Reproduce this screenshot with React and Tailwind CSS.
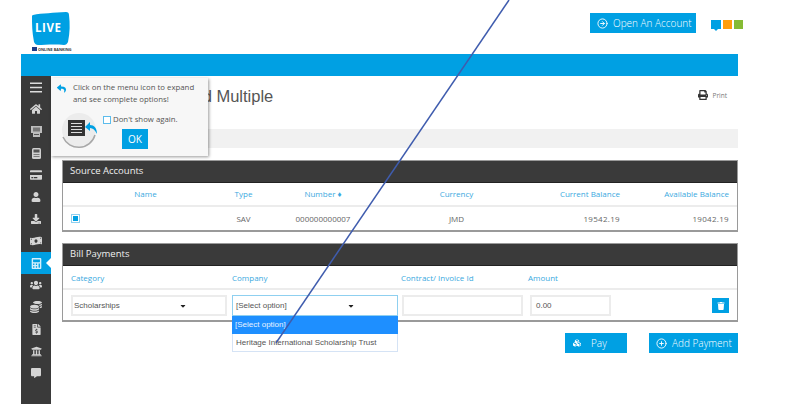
import {
  FaHome, FaCreditCard, FaUser, FaDownload, FaMoneyBillWave, FaCalculator, FaUsers, FaCoins,
  FaFileInvoiceDollar, FaUniversity, FaCommentAlt, FaPrint, FaTrash, FaReply, FaCaretDown, FaCubes,
} from "react-icons/fa";
import { FiArrowRightCircle, FiPlusCircle } from "react-icons/fi";

const MenuLines = () => (
  <svg width="12" height="11" viewBox="0 0 12 11">
    <path d="M0 1.2h12M0 5.5h12M0 9.8h12" stroke="#ddd" strokeWidth="1.4" />
  </svg>
);

const AtmIcon = () => (
  <svg width="11" height="11" viewBox="0 0 11 11">
    <path d="M0 0h11v7H9v4H2V7H0Z" fill="#bdbdbd" />
    <path d="M2 1.5h7v4H2Z" fill="#777" />
    <path d="M3 8h5v1H3Z" fill="#555" />
  </svg>
);

const DeviceIcon = () => (
  <svg width="9" height="11" viewBox="0 0 9 11">
    <rect x="0" y="0" width="9" height="11" rx="1.5" fill="#cfcfcf" />
    <rect x="1.5" y="1.5" width="6" height="3" fill="#555" />
    <path d="M1.5 6.5h6M1.5 8.5h6" stroke="#666" strokeWidth="0.8" />
  </svg>
);

const sideItems = [
  { custom: MenuLines },
  { icon: FaHome, size: 12 },
  { custom: AtmIcon },
  { custom: DeviceIcon },
  { icon: FaCreditCard, size: 12 },
  { icon: FaUser, size: 10 },
  { icon: FaDownload, size: 10 },
  { icon: FaMoneyBillWave, size: 12 },
  { icon: FaCalculator, size: 11, active: true },
  { icon: FaUsers, size: 12 },
  { icon: FaCoins, size: 12 },
  { icon: FaFileInvoiceDollar, size: 11 },
  { icon: FaUniversity, size: 11 },
  { icon: FaCommentAlt, size: 10 },
];

const Logo = () => (
  <svg width="42" height="40" viewBox="0 0 42 40" className="block">
    <path d="M3 3 C12 1 24 1 36 0 C38 0 39 1 39 3 C40 12 40 20 38 30 C37 32 36 33 34 33 C24 32 14 33 8 33 C6 33 5 32 4 30 C2 20 2 12 2 5 C2 4 2 3 3 3 Z" fill="#00a0e3" />
    <text x="5" y="20" fill="#fff" fontSize="11.5" fontWeight="700" letterSpacing="0.6" fontFamily="'Open Sans', sans-serif">LIVE</text>
    <rect x="2" y="35" width="5" height="4" fill="#1f3c88" />
    <text x="8" y="39" fill="#333" fontSize="3.8" fontWeight="700" fontFamily="'Open Sans', sans-serif">ONLINE BANKING</text>
  </svg>
);

const MenuHint = () => (
  <svg width="44" height="36" viewBox="0 0 44 36" className="block">
    <circle cx="20" cy="17" r="17" fill="#ececec" />
    <path d="M4 24 A17 17 0 0 0 36 22" fill="none" stroke="#a8a8a8" strokeWidth="1.5" />
    <rect x="9" y="7" width="17" height="16" fill="#333" />
    <path d="M12 10.5h11M12 13.5h11M12 16.5h11M12 19.5h11" stroke="#ddd" strokeWidth="1.2" />
    <path d="M38 21 C38 15 35 12 31 12 L31 9 L26 14 L31 18 L31 15 C34 15 36 17 38 21 Z" fill="#00a0e3" />
  </svg>
);

const PanelHead = ({ children }) => (
  <div className="h-[22px] bg-[#3a3a3a] text-[#efefef] text-[9.5px] leading-[20px] pl-[7px] border-b border-[#222]">{children}</div>
);

const Field = ({ className, children }) => (
  <div className={`h-[21px] border-2 border-[#ececec] bg-white text-[#555] text-[8px] flex items-center ${className}`}>
    {children}
  </div>
);

export default function App() {
  return (
    <div className="relative w-[800px] h-[418px] overflow-hidden bg-white font-['Open_Sans',sans-serif]">
      {/* top */}
      <div className="h-[54px] pl-[30px] pr-[57px] flex justify-between">
        <div className="pt-[12px]"><Logo /></div>
        <div className="flex gap-[15px] pt-[13px] items-start">
          <button className="w-[106px] h-[20px] bg-[#00a0e3] text-white text-[10px] font-light whitespace-nowrap flex items-center pl-[7px] gap-[5px]">
            <FiArrowRightCircle size={11} /> Open An Account
          </button>
          <div className="flex gap-[2px] pt-[7px]">
            <span className="relative w-[10px] h-[9px] bg-[#00a0e3]">
              <span className="absolute left-[3px] top-[9px] border-x-[2px] border-x-transparent border-t-[2px] border-t-[#00a0e3]"></span>
            </span>
            <span className="w-[9px] h-[9px] bg-[#ff9e0d]"></span>
            <span className="w-[9px] h-[9px] bg-[#86bb34]"></span>
          </div>
        </div>
      </div>

      <div className="ml-[21px] w-[717px]">
        <div className="h-[22px] bg-[#00a0e3]"></div>
        <div className="flex">
          {/* sidebar */}
          <div className="w-[30px] h-[328px] bg-[#3a3a3a] shrink-0">
            {sideItems.map((item, i) => {
              const Icon = item.icon;
              const Custom = item.custom;
              return (
                <div key={i} className={`relative h-[22px] flex items-center justify-center ${item.active ? "bg-[#00a0e3] text-[#d5effb]" : "text-[#d4d4d4]"}`}>
                  {Custom ? <Custom /> : <Icon size={item.size} />}
                  {item.active && (
                    <span className="absolute right-0 top-[6px] border-y-[5px] border-y-transparent border-r-[5px] border-r-white"></span>
                  )}
                </div>
              );
            })}
          </div>

          {/* content */}
          <div className="flex-1 pl-[11px]">
            <div className="h-[53px] flex justify-between">
              <h1 className="pt-[8px] pl-[4px] text-[16.5px] text-[#555] font-['Liberation_Sans',sans-serif]">Pay Bills Single and Multiple</h1>
              <div className="flex items-start gap-[4px] pt-[14px] pr-[11px] text-[#777] text-[6.5px]">
                <FaPrint size={10} className="text-[#333]" />
                <span className="leading-[12px]">Print</span>
              </div>
            </div>
            <div className="h-[19px] bg-[#f1f1f1]"></div>

            <div className="mt-[12px] border border-[#9a9a9a] border-b-2">
              <PanelHead>Source Accounts</PanelHead>
              <div className="h-[24px] grid grid-cols-[130px_70px_100px_157px_100px_1fr] items-center border-b-2 border-[#ececec] text-[#3aa9e0] text-[8px]">
                <span className="text-center pl-[35px]">Name</span>
                <span className="text-center pl-[31px]">Type</span>
                <span className="text-center pl-[20px]">Number ♦</span>
                <span className="text-center pl-[30px]">Currency</span>
                <span className="text-right pl-[10px]">Current Balance</span>
                <span className="text-right pr-[8px]">Available Balance</span>
              </div>
              <div className="h-[23px] grid grid-cols-[130px_70px_100px_157px_100px_1fr] items-center text-[#666] text-[8px]">
                <span className="pl-[8px]">
                  <span className="w-[9px] h-[9px] border border-[#8fd0f0] flex items-center justify-center">
                    <span className="w-[5px] h-[5px] bg-[#00a0e3]"></span>
                  </span>
                </span>
                <span className="text-center pl-[31px]">SAV</span>
                <span className="text-center pl-[20px]">000000000007</span>
                <span className="text-center pl-[30px]">JMD</span>
                <span className="text-right tracking-[0.3px]">19542.19</span>
                <span className="text-right pr-[8px] tracking-[0.3px]">19042.19</span>
              </div>
            </div>

            <div className="mt-[11px] border border-[#9a9a9a] border-b-2">
              <PanelHead>Bill Payments</PanelHead>
              <div className="h-[24px] flex items-center pl-[8px] pt-[1px] border-b-2 border-[#ececec] text-[#3aa9e0] text-[8px]">
                <span className="w-[161px]">Category</span>
                <span className="w-[169px]">Company</span>
                <span className="w-[127px]">Contract/ Invoice Id</span>
                <span>Amount</span>
              </div>
              <div className="h-[30px] flex items-center pl-[8px] pt-[1px] font-['Liberation_Sans',sans-serif]">
                <Field className="w-[156px] justify-between pl-[1px] pr-[38px] mr-[5px]">
                  Scholarships <FaCaretDown size={8} className="text-[#222]" />
                </Field>
                <div className="relative mr-[4px]">
                  <Field className="w-[166px] justify-between pl-[3px] pr-[42px] !border !border-[#8fd0f0]">
                    [Select option] <FaCaretDown size={8} className="text-[#222]" />
                  </Field>
                  {/* open dropdown */}
                  <div className="absolute left-0 top-[21px] w-[166px] text-[8px] z-10">
                    <div className="h-[18px] bg-[#1e8fff] text-[#e6f2ff] flex items-center pl-[3px]">[Select option]</div>
                    <div className="h-[18px] bg-white border border-t-0 border-[#d5e3f5] text-[#555] flex items-center pl-[3px] whitespace-nowrap">Heritage International Scholarship Trust</div>
                  </div>
                </div>
                <Field className="w-[121px] mr-[7px]"></Field>
                <Field className="w-[81px] pl-1">0.00</Field>
                <button className="ml-[101px] w-[17px] h-[15px] bg-[#00a0e3] text-white flex items-center justify-center">
                  <FaTrash size={8} />
                </button>
              </div>
            </div>

            <div className="mt-[11px] flex justify-end gap-[22px]">
              <button className="w-[62px] h-[20px] bg-[#00a0e3] text-white text-[10px] font-light flex items-center pl-[8px] gap-[10px]">
                <FaCubes size={8} /> Pay
              </button>
              <button className="w-[89px] h-[20px] bg-[#00a0e3] text-white text-[10px] font-light whitespace-nowrap flex items-center pl-[7px] gap-[5px]">
                <FiPlusCircle size={11} /> Add Payment
              </button>
            </div>
          </div>
        </div>
      </div>

      {/* help popup over the menu */}
      <div className="absolute left-[51px] top-[78px] w-[157px] h-[78px] bg-[#f7f7f7] shadow-[1px_1px_3px_rgba(0,0,0,0.4)] text-[#555] text-[7.8px]">
        <FaReply size={9} className="absolute left-[6px] top-[6px] text-[#00a0e3]" />
        <p className="absolute left-[22px] top-[4px] w-[130px] leading-[11.5px]">Click on the menu icon to expand and see complete options!</p>
        <div className="absolute left-[8px] top-[35px]"><MenuHint /></div>
        <div className="absolute left-[52px] top-[36px] flex items-center gap-[2px]">
          <span className="w-[8px] h-[8px] border border-[#5cbcec] bg-white"></span>
          <span>Don't show again.</span>
        </div>
        <button className="absolute left-[71px] top-[51px] w-[26px] h-[20px] bg-[#00a0e3] text-white text-[10px]">OK</button>
      </div>

      {/* annotation line drawn over the shot */}
      <svg width="800" height="418" className="absolute left-0 top-0 z-20 pointer-events-none">
        <line x1="509" y1="0" x2="276" y2="343" stroke="#3f5cae" strokeWidth="1.5" />
      </svg>
    </div>
  );
}
